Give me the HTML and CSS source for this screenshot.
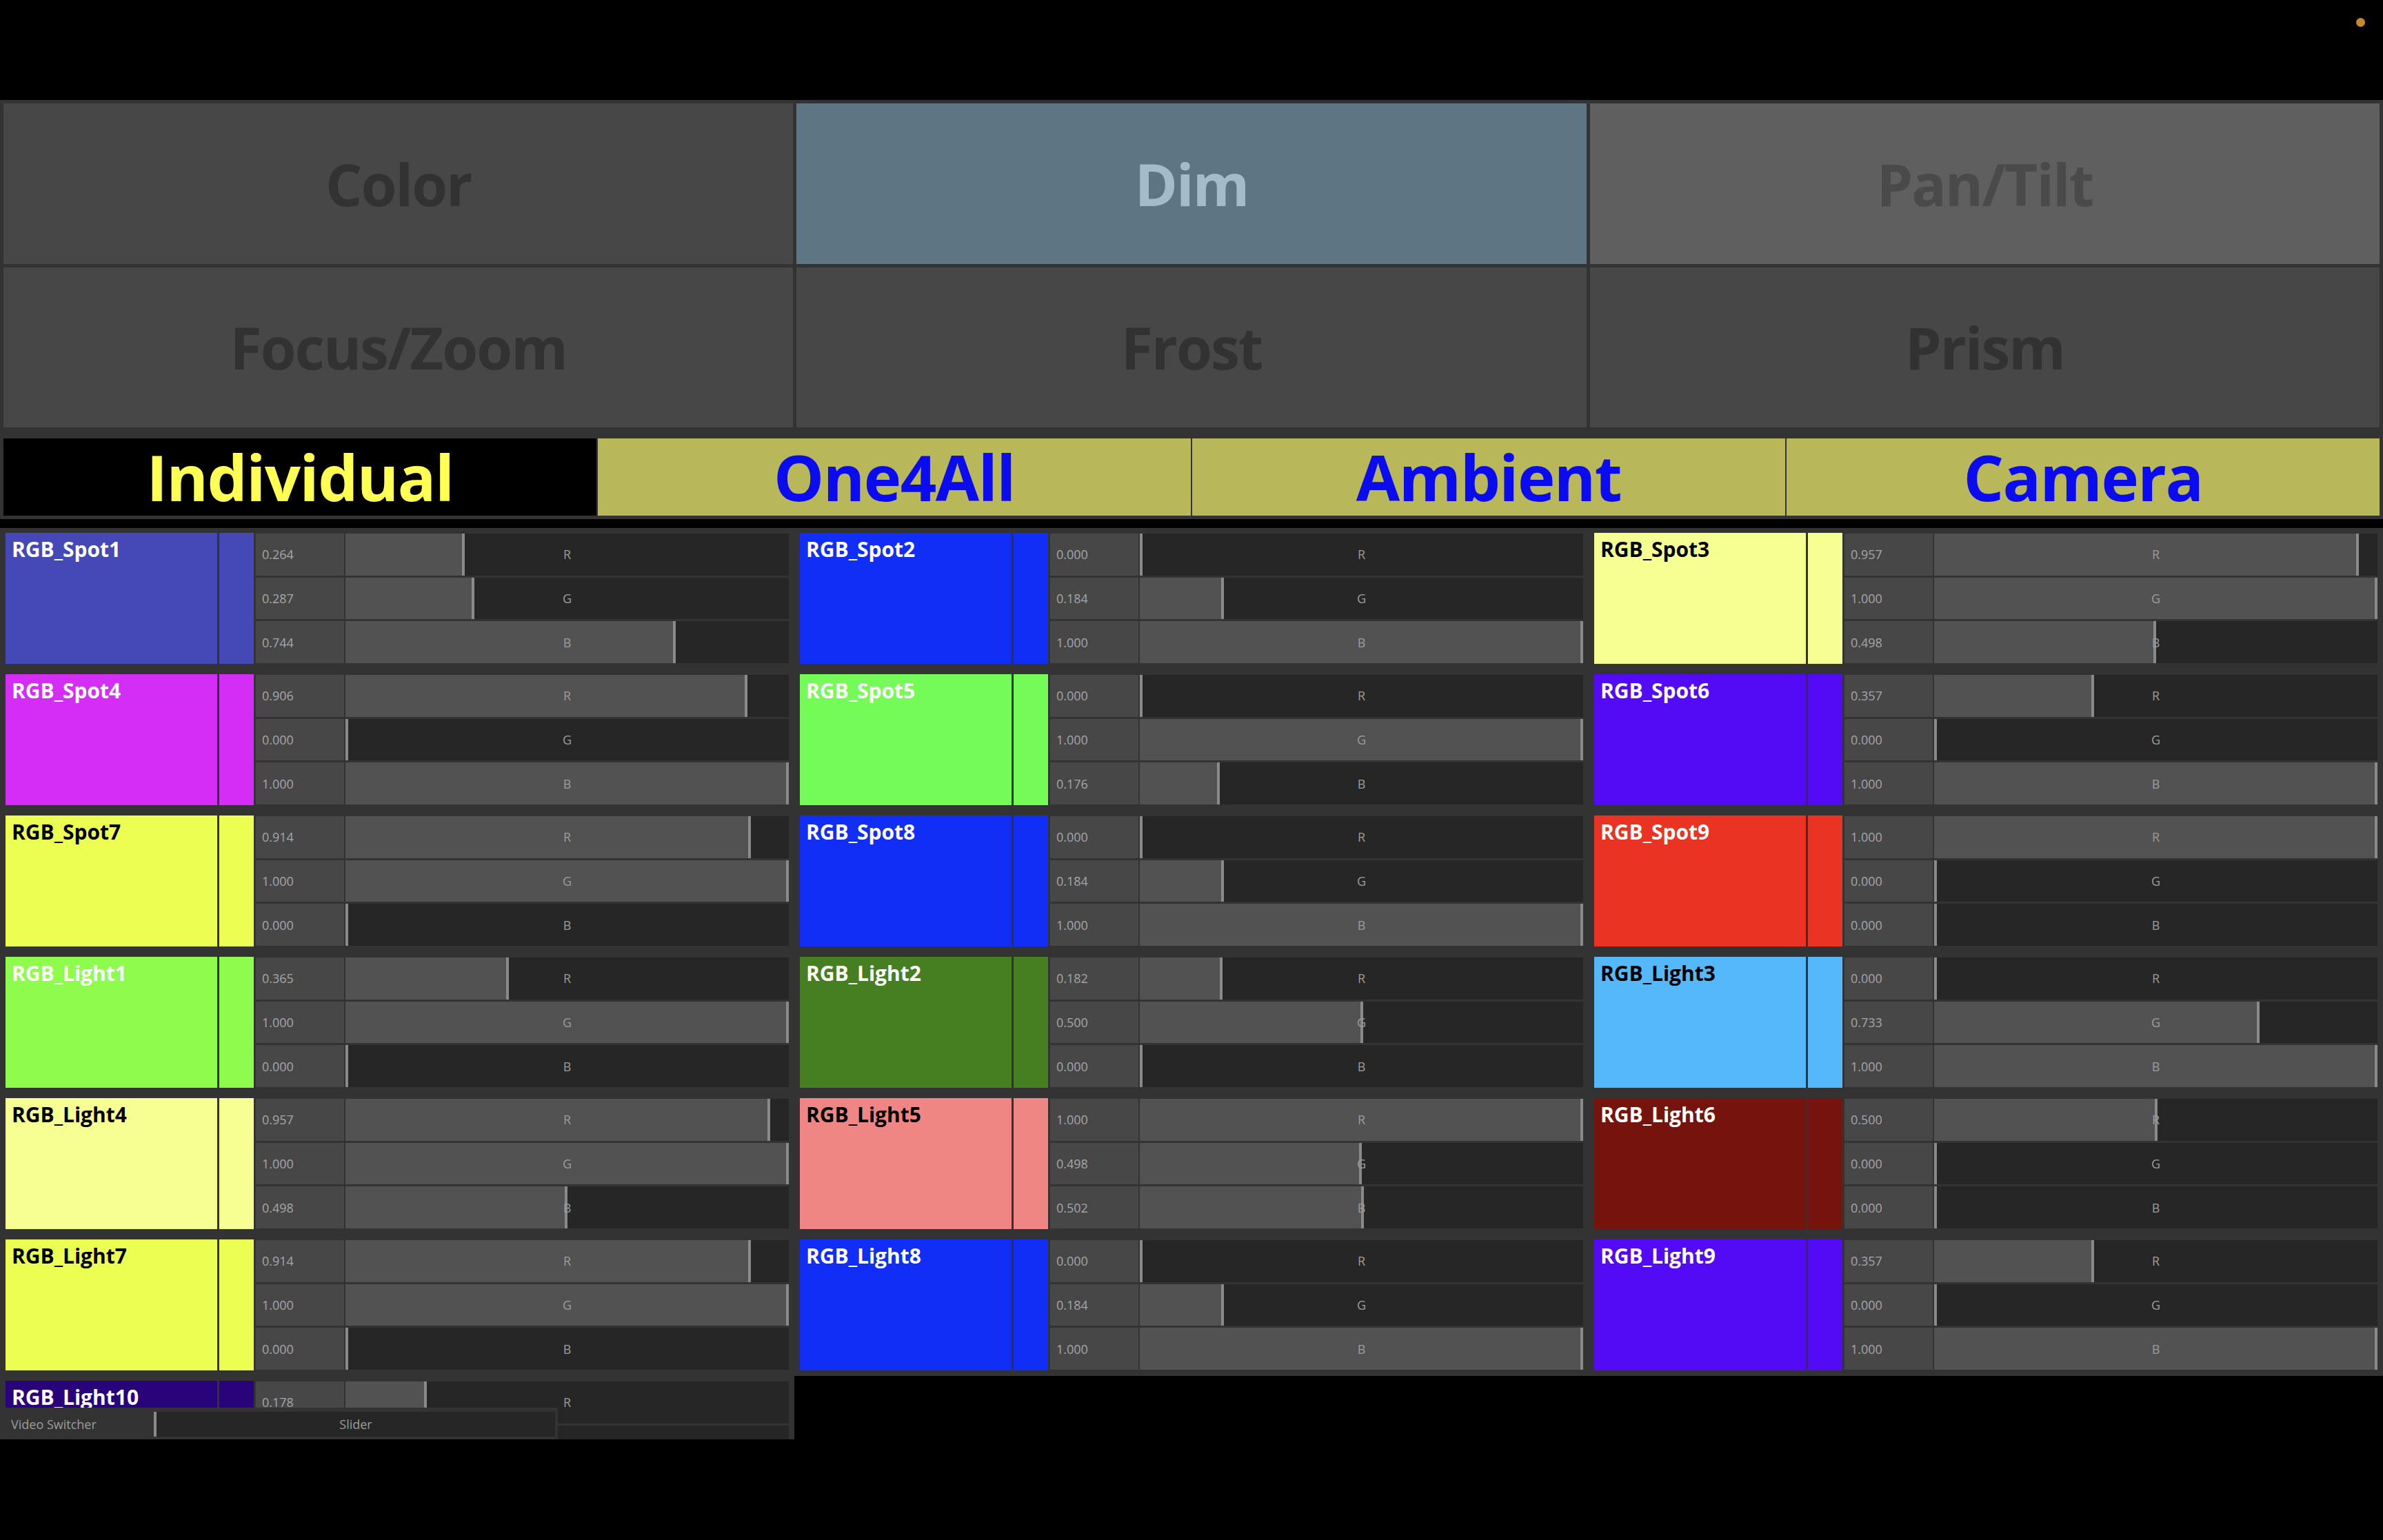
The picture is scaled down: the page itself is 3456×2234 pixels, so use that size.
FILE: index.html
```html
<!DOCTYPE html>
<html>
<head>
<meta charset="utf-8">
<link rel="stylesheet" href="styles.css">
</head>
<body>
<div class="topbar"><span class="dot"></span></div>
<div class="panel">
  <div class="btngrid">
    <div class="btn">Color</div>
    <div class="btn btn-active">Dim</div>
    <div class="btn btn-light">Pan/Tilt</div>
    <div class="btn">Focus/Zoom</div>
    <div class="btn">Frost</div>
    <div class="btn">Prism</div>
  </div>
  <div class="tabs">
    <div class="tab tab-sel">Individual</div>
    <div class="tab">One4All</div>
    <div class="tab">Ambient</div>
    <div class="tab">Camera</div>
  </div>
</div>
<div class="viewport">
  <div class="fixtures">
    <div class="cell"><div class="fx">
      <div class="name" style="background:#4449b7">RGB_Spot1</div><div class="swatch" style="background:#4449b7"></div>
      <div class="chans">
        <div class="chan"><div class="val">0.264</div><div class="track"><div class="fill" style="--v:0.264"></div><span class="ch">R</span></div></div>
        <div class="chan"><div class="val">0.287</div><div class="track"><div class="fill" style="--v:0.287"></div><span class="ch">G</span></div></div>
        <div class="chan"><div class="val">0.744</div><div class="track"><div class="fill" style="--v:0.744"></div><span class="ch">B</span></div></div>
      </div></div></div>
    <div class="cell"><div class="fx">
      <div class="name" style="background:#102ef5">RGB_Spot2</div><div class="swatch" style="background:#102ef5"></div>
      <div class="chans">
        <div class="chan"><div class="val">0.000</div><div class="track"><div class="fill" style="--v:0"></div><span class="ch">R</span></div></div>
        <div class="chan"><div class="val">0.184</div><div class="track"><div class="fill" style="--v:0.184"></div><span class="ch">G</span></div></div>
        <div class="chan"><div class="val">1.000</div><div class="track"><div class="fill" style="--v:1"></div><span class="ch">B</span></div></div>
      </div></div></div>
    <div class="cell"><div class="fx">
      <div class="name name-dark" style="background:#f6ff91">RGB_Spot3</div><div class="swatch" style="background:#f6ff91"></div>
      <div class="chans">
        <div class="chan"><div class="val">0.957</div><div class="track"><div class="fill" style="--v:0.957"></div><span class="ch">R</span></div></div>
        <div class="chan"><div class="val">1.000</div><div class="track"><div class="fill" style="--v:1"></div><span class="ch">G</span></div></div>
        <div class="chan"><div class="val">0.498</div><div class="track"><div class="fill" style="--v:0.498"></div><span class="ch">B</span></div></div>
      </div></div></div>

    <div class="cell"><div class="fx">
      <div class="name" style="background:#d42df6">RGB_Spot4</div><div class="swatch" style="background:#d42df6"></div>
      <div class="chans">
        <div class="chan"><div class="val">0.906</div><div class="track"><div class="fill" style="--v:0.906"></div><span class="ch">R</span></div></div>
        <div class="chan"><div class="val">0.000</div><div class="track"><div class="fill" style="--v:0"></div><span class="ch">G</span></div></div>
        <div class="chan"><div class="val">1.000</div><div class="track"><div class="fill" style="--v:1"></div><span class="ch">B</span></div></div>
      </div></div></div>
    <div class="cell"><div class="fx">
      <div class="name" style="background:#75fb57">RGB_Spot5</div><div class="swatch" style="background:#75fb57"></div>
      <div class="chans">
        <div class="chan"><div class="val">0.000</div><div class="track"><div class="fill" style="--v:0"></div><span class="ch">R</span></div></div>
        <div class="chan"><div class="val">1.000</div><div class="track"><div class="fill" style="--v:1"></div><span class="ch">G</span></div></div>
        <div class="chan"><div class="val">0.176</div><div class="track"><div class="fill" style="--v:0.176"></div><span class="ch">B</span></div></div>
      </div></div></div>
    <div class="cell"><div class="fx">
      <div class="name" style="background:#530bf5">RGB_Spot6</div><div class="swatch" style="background:#530bf5"></div>
      <div class="chans">
        <div class="chan"><div class="val">0.357</div><div class="track"><div class="fill" style="--v:0.357"></div><span class="ch">R</span></div></div>
        <div class="chan"><div class="val">0.000</div><div class="track"><div class="fill" style="--v:0"></div><span class="ch">G</span></div></div>
        <div class="chan"><div class="val">1.000</div><div class="track"><div class="fill" style="--v:1"></div><span class="ch">B</span></div></div>
      </div></div></div>

    <div class="cell"><div class="fx">
      <div class="name name-dark" style="background:#edfe53">RGB_Spot7</div><div class="swatch" style="background:#edfe53"></div>
      <div class="chans">
        <div class="chan"><div class="val">0.914</div><div class="track"><div class="fill" style="--v:0.914"></div><span class="ch">R</span></div></div>
        <div class="chan"><div class="val">1.000</div><div class="track"><div class="fill" style="--v:1"></div><span class="ch">G</span></div></div>
        <div class="chan"><div class="val">0.000</div><div class="track"><div class="fill" style="--v:0"></div><span class="ch">B</span></div></div>
      </div></div></div>
    <div class="cell"><div class="fx">
      <div class="name" style="background:#102ef5">RGB_Spot8</div><div class="swatch" style="background:#102ef5"></div>
      <div class="chans">
        <div class="chan"><div class="val">0.000</div><div class="track"><div class="fill" style="--v:0"></div><span class="ch">R</span></div></div>
        <div class="chan"><div class="val">0.184</div><div class="track"><div class="fill" style="--v:0.184"></div><span class="ch">G</span></div></div>
        <div class="chan"><div class="val">1.000</div><div class="track"><div class="fill" style="--v:1"></div><span class="ch">B</span></div></div>
      </div></div></div>
    <div class="cell"><div class="fx">
      <div class="name" style="background:#ea3323">RGB_Spot9</div><div class="swatch" style="background:#ea3323"></div>
      <div class="chans">
        <div class="chan"><div class="val">1.000</div><div class="track"><div class="fill" style="--v:1"></div><span class="ch">R</span></div></div>
        <div class="chan"><div class="val">0.000</div><div class="track"><div class="fill" style="--v:0"></div><span class="ch">G</span></div></div>
        <div class="chan"><div class="val">0.000</div><div class="track"><div class="fill" style="--v:0"></div><span class="ch">B</span></div></div>
      </div></div></div>

    <div class="cell"><div class="fx">
      <div class="name" style="background:#8dfc4d">RGB_Light1</div><div class="swatch" style="background:#8dfc4d"></div>
      <div class="chans">
        <div class="chan"><div class="val">0.365</div><div class="track"><div class="fill" style="--v:0.365"></div><span class="ch">R</span></div></div>
        <div class="chan"><div class="val">1.000</div><div class="track"><div class="fill" style="--v:1"></div><span class="ch">G</span></div></div>
        <div class="chan"><div class="val">0.000</div><div class="track"><div class="fill" style="--v:0"></div><span class="ch">B</span></div></div>
      </div></div></div>
    <div class="cell"><div class="fx">
      <div class="name" style="background:#467e22">RGB_Light2</div><div class="swatch" style="background:#467e22"></div>
      <div class="chans">
        <div class="chan"><div class="val">0.182</div><div class="track"><div class="fill" style="--v:0.182"></div><span class="ch">R</span></div></div>
        <div class="chan"><div class="val">0.500</div><div class="track"><div class="fill" style="--v:0.5"></div><span class="ch">G</span></div></div>
        <div class="chan"><div class="val">0.000</div><div class="track"><div class="fill" style="--v:0"></div><span class="ch">B</span></div></div>
      </div></div></div>
    <div class="cell"><div class="fx">
      <div class="name name-dark" style="background:#54b8f9">RGB_Light3</div><div class="swatch" style="background:#54b8f9"></div>
      <div class="chans">
        <div class="chan"><div class="val">0.000</div><div class="track"><div class="fill" style="--v:0"></div><span class="ch">R</span></div></div>
        <div class="chan"><div class="val">0.733</div><div class="track"><div class="fill" style="--v:0.733"></div><span class="ch">G</span></div></div>
        <div class="chan"><div class="val">1.000</div><div class="track"><div class="fill" style="--v:1"></div><span class="ch">B</span></div></div>
      </div></div></div>

    <div class="cell"><div class="fx">
      <div class="name name-dark" style="background:#f6ff91">RGB_Light4</div><div class="swatch" style="background:#f6ff91"></div>
      <div class="chans">
        <div class="chan"><div class="val">0.957</div><div class="track"><div class="fill" style="--v:0.957"></div><span class="ch">R</span></div></div>
        <div class="chan"><div class="val">1.000</div><div class="track"><div class="fill" style="--v:1"></div><span class="ch">G</span></div></div>
        <div class="chan"><div class="val">0.498</div><div class="track"><div class="fill" style="--v:0.498"></div><span class="ch">B</span></div></div>
      </div></div></div>
    <div class="cell"><div class="fx">
      <div class="name name-dark" style="background:#ef8684">RGB_Light5</div><div class="swatch" style="background:#ef8684"></div>
      <div class="chans">
        <div class="chan"><div class="val">1.000</div><div class="track"><div class="fill" style="--v:1"></div><span class="ch">R</span></div></div>
        <div class="chan"><div class="val">0.498</div><div class="track"><div class="fill" style="--v:0.498"></div><span class="ch">G</span></div></div>
        <div class="chan"><div class="val">0.502</div><div class="track"><div class="fill" style="--v:0.502"></div><span class="ch">B</span></div></div>
      </div></div></div>
    <div class="cell"><div class="fx">
      <div class="name" style="background:#74140c">RGB_Light6</div><div class="swatch" style="background:#74140c"></div>
      <div class="chans">
        <div class="chan"><div class="val">0.500</div><div class="track"><div class="fill" style="--v:0.5"></div><span class="ch">R</span></div></div>
        <div class="chan"><div class="val">0.000</div><div class="track"><div class="fill" style="--v:0"></div><span class="ch">G</span></div></div>
        <div class="chan"><div class="val">0.000</div><div class="track"><div class="fill" style="--v:0"></div><span class="ch">B</span></div></div>
      </div></div></div>

    <div class="cell"><div class="fx">
      <div class="name name-dark" style="background:#edfe53">RGB_Light7</div><div class="swatch" style="background:#edfe53"></div>
      <div class="chans">
        <div class="chan"><div class="val">0.914</div><div class="track"><div class="fill" style="--v:0.914"></div><span class="ch">R</span></div></div>
        <div class="chan"><div class="val">1.000</div><div class="track"><div class="fill" style="--v:1"></div><span class="ch">G</span></div></div>
        <div class="chan"><div class="val">0.000</div><div class="track"><div class="fill" style="--v:0"></div><span class="ch">B</span></div></div>
      </div></div></div>
    <div class="cell"><div class="fx">
      <div class="name" style="background:#102ef5">RGB_Light8</div><div class="swatch" style="background:#102ef5"></div>
      <div class="chans">
        <div class="chan"><div class="val">0.000</div><div class="track"><div class="fill" style="--v:0"></div><span class="ch">R</span></div></div>
        <div class="chan"><div class="val">0.184</div><div class="track"><div class="fill" style="--v:0.184"></div><span class="ch">G</span></div></div>
        <div class="chan"><div class="val">1.000</div><div class="track"><div class="fill" style="--v:1"></div><span class="ch">B</span></div></div>
      </div></div></div>
    <div class="cell"><div class="fx">
      <div class="name" style="background:#530bf5">RGB_Light9</div><div class="swatch" style="background:#530bf5"></div>
      <div class="chans">
        <div class="chan"><div class="val">0.357</div><div class="track"><div class="fill" style="--v:0.357"></div><span class="ch">R</span></div></div>
        <div class="chan"><div class="val">0.000</div><div class="track"><div class="fill" style="--v:0"></div><span class="ch">G</span></div></div>
        <div class="chan"><div class="val">1.000</div><div class="track"><div class="fill" style="--v:1"></div><span class="ch">B</span></div></div>
      </div></div></div>

    <div class="cell"><div class="fx">
      <div class="name" style="background:#29037a">RGB_Light10</div><div class="swatch" style="background:#29037a"></div>
      <div class="chans">
        <div class="chan"><div class="val">0.178</div><div class="track"><div class="fill" style="--v:0.178"></div><span class="ch">R</span></div></div>
        <div class="chan"><div class="val"></div><div class="track"><div class="fill" style="--v:0"></div></div></div>
        <div class="chan"><div class="val"></div><div class="track"><div class="fill" style="--v:0.5"></div></div></div>
      </div></div></div>
  </div>
  <div class="switcher">
    <div class="sw-label">Video Switcher</div>
    <div class="sw-track"><span class="ch">Slider</span></div>
  </div>
</div>
</body>
</html>
```

FILE: styles.css
```css
* { box-sizing: border-box; }
html, body { margin: 0; padding: 0; }
body {
  background: #000;
  width: 3456px;
  height: 2234px;
  overflow: hidden;
  font-family: "Open Sans", "Noto Sans", sans-serif;
}
.topbar {
  height: 145px;
  display: flex;
  justify-content: flex-end;
  align-items: flex-start;
  padding: 26px 26px 0 0;
}
.dot {
  width: 13px;
  height: 13px;
  border-radius: 50%;
  background: #c8882f;
}
.panel {
  background: #333333;
  padding: 5px;
  height: 608px;
}
.btngrid {
  display: grid;
  grid-template-columns: repeat(3, 1fr);
  grid-template-rows: 233px 232px;
  gap: 5px;
}
.btn {
  background: #474747;
  color: #323232;
  font-weight: 700;
  font-size: 84px;
  letter-spacing: -2px;
  line-height: 1;
  display: flex;
  align-items: center;
  justify-content: center;
}
.btn-active { background: #5e7684; color: #a2bccc; }
.btn-light { background: #5f5f5f; color: #4a4a4a; }
.tabs {
  margin-top: 16px;
  height: 112px;
  display: flex;
  gap: 2px;
}
.tab {
  flex: 1;
  background: #b8b85a;
  color: #0b0bf0;
  font-weight: 700;
  font-size: 92px;
  letter-spacing: -1.5px;
  line-height: 1;
  display: flex;
  align-items: center;
  justify-content: center;
}
.tab-sel { background: #000; color: #ffff54; }
.viewport {
  margin-top: 13px;
  height: 1322px;
  overflow: hidden;
  position: relative;
}
.fixtures {
  display: grid;
  grid-template-columns: repeat(3, 1152px);
  grid-auto-rows: 205px;
}
.cell {
  background: #333333;
  padding: 7px 8px 8px 8px;
}
.fx {
  height: 190px;
  display: flex;
}
.name {
  width: 307px;
  flex: none;
  color: #fff;
  font-weight: 700;
  font-size: 30px;
  line-height: 40px;
  padding: 4px 0 0 9px;
  white-space: nowrap;
  overflow: hidden;
}
.name-dark { color: #000; }
.swatch {
  width: 50px;
  flex: none;
  margin-left: 3px;
}
.chans {
  flex: 1;
  margin-left: 3px;
  display: flex;
  flex-direction: column;
  gap: 3px;
  padding: 1px 0 1px 0;
}
.chan {
  flex: 1;
  display: flex;
  gap: 2px;
}
.val {
  width: 128px;
  flex: none;
  background: #474747;
  color: #a6a6a6;
  font-size: 18px;
  display: flex;
  align-items: center;
  padding-left: 9px;
}
.track {
  flex: 1;
  background: #262626;
  display: grid;
}
.fill {
  grid-area: 1 / 1;
  justify-self: start;
  width: calc(var(--v) * (100% - 4px) + 4px);
  background: #525252;
  border-right: 4px solid #8a8a8a;
}
.ch {
  grid-area: 1 / 1;
  align-self: center;
  justify-self: center;
  color: #9c9c9c;
  font-size: 18px;
  line-height: 1;
}
.switcher {
  position: absolute;
  left: 0;
  bottom: 0;
  width: 809px;
  height: 46px;
  background: #333333;
  display: flex;
  padding: 6px 4px 4px 0;
}
.sw-label {
  width: 223px;
  flex: none;
  color: #9c9c9c;
  font-size: 18px;
  display: flex;
  align-items: center;
  padding-left: 16px;
}
.sw-track {
  flex: 1;
  background: #262626;
  border-left: 4px solid #8a8a8a;
  display: grid;
}
```
